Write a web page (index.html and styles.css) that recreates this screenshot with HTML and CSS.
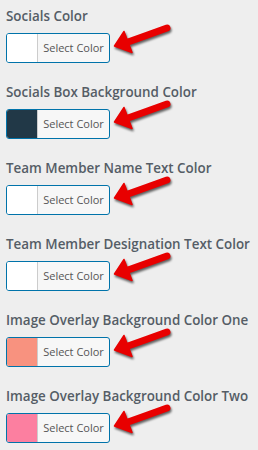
FILE: index.html
```html
<!DOCTYPE html>
<html lang="en">
<head>
    <meta charset="UTF-8">
    <title>Color Settings</title>
    <link rel="stylesheet" href="styles.css">
</head>
<body>
    <div class="settings">
        <div class="field">
            <label>Socials Color</label>
            <button class="color-btn"><span class="swatch white"></span><span class="btn-text">Select Color</span></button>
            <svg class="arrow" viewBox="0 0 60 34"><path d="M15 21 Q32 15 54 7" /><polygon points="1.5,25 11,10.5 19,31.5" /></svg>
        </div>
        <div class="field">
            <label>Socials Box Background Color</label>
            <button class="color-btn"><span class="swatch dark"></span><span class="btn-text">Select Color</span></button>
            <svg class="arrow" viewBox="0 0 60 34"><path d="M15 21 Q32 15 54 7" /><polygon points="1.5,25 11,10.5 19,31.5" /></svg>
        </div>
        <div class="field">
            <label>Team Member Name Text Color</label>
            <button class="color-btn"><span class="swatch white"></span><span class="btn-text">Select Color</span></button>
            <svg class="arrow" viewBox="0 0 60 34"><path d="M15 21 Q32 15 54 7" /><polygon points="1.5,25 11,10.5 19,31.5" /></svg>
        </div>
        <div class="field">
            <label>Team Member Designation Text Color</label>
            <button class="color-btn"><span class="swatch white"></span><span class="btn-text">Select Color</span></button>
            <svg class="arrow" viewBox="0 0 60 34"><path d="M15 21 Q32 15 54 7" /><polygon points="1.5,25 11,10.5 19,31.5" /></svg>
        </div>
        <div class="field">
            <label>Image Overlay Background Color One</label>
            <button class="color-btn"><span class="swatch salmon"></span><span class="btn-text">Select Color</span></button>
            <svg class="arrow" viewBox="0 0 60 34"><path d="M15 21 Q32 15 54 7" /><polygon points="1.5,25 11,10.5 19,31.5" /></svg>
        </div>
        <div class="field">
            <label>Image Overlay Background Color Two</label>
            <button class="color-btn"><span class="swatch pink"></span><span class="btn-text">Select Color</span></button>
            <svg class="arrow" viewBox="0 0 60 34"><path d="M15 21 Q32 15 54 7" /><polygon points="1.5,25 11,10.5 19,31.5" /></svg>
        </div>
    </div>
</body>
</html>
```
FILE: styles.css
```css
* {
    box-sizing: border-box;
    margin: 0;
    padding: 0;
}

body {
    background: #eeeeee;
    font-family: 'Open Sans', 'Noto Sans', sans-serif;
    color: #555d66;
}

.settings {
    padding: 0 6px;
}

.field {
    position: relative;
    height: 76px;
    padding-top: 7px;
}

.field label {
    display: block;
    font-size: 13.4px;
    font-weight: 600;
    line-height: 18px;
    margin-bottom: 8px;
}

.color-btn {
    display: flex;
    width: 104px;
    height: 30px;
    border: 1px solid #0073aa;
    border-radius: 3px;
    background: #f7f7f7;
    overflow: hidden;
    font-family: inherit;
    cursor: pointer;
}

.swatch {
    width: 31px;
    height: 100%;
    border-right: 1px solid #cccccc;
}

.swatch.white { background: #ffffff; }
.swatch.dark { background: #213847; }
.swatch.salmon { background: #f8927f; }
.swatch.pink { background: #fc7fa0; }

.btn-text {
    flex: 1;
    font-size: 11px;
    line-height: 28px;
    color: #555555;
    text-align: center;
}

.arrow {
    position: absolute;
    left: 107px;
    top: 21px;
    width: 60px;
    height: 34px;
    filter: drop-shadow(1px 2px 1px rgba(0, 0, 0, 0.6));
}

.arrow path {
    fill: none;
    stroke: #e80000;
    stroke-width: 7;
    stroke-linecap: round;
}

.arrow polygon {
    fill: #e80000;
    stroke: #e80000;
    stroke-width: 1.5;
    stroke-linejoin: round;
}
```
